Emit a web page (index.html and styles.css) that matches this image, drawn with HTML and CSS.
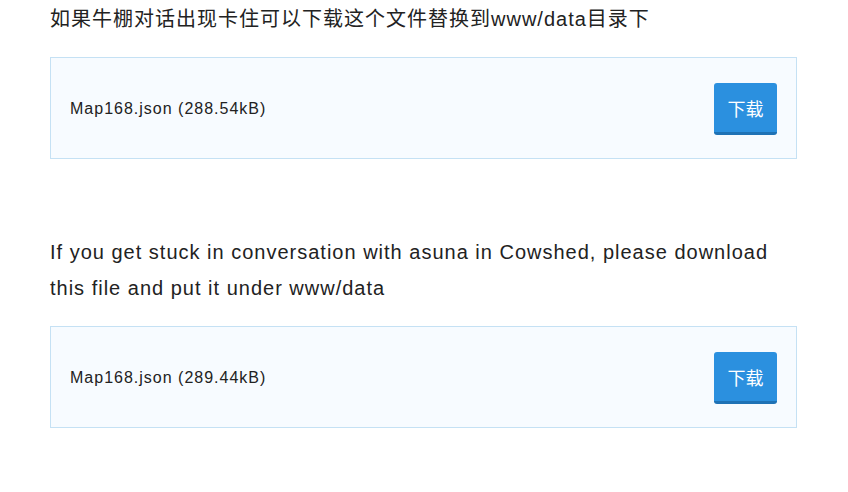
FILE: index.html
```html
<!DOCTYPE html>
<html lang="zh">
<head>
    <meta charset="utf-8">
    <meta name="viewport" content="width=device-width, initial-scale=1.0">
    <title>Map168</title>
    <link rel="stylesheet" href="styles.css">
</head>
<body>
    <main class="post">
        <p class="tekst">如果牛棚对话出现卡住可以下载这个文件替换到www/data目录下</p>
        <div class="fil">
            <span class="fil-navn">Map168.json (288.54kB)</span>
            <button class="knap">下载</button>
        </div>

        <p class="tekst">If you get stuck in conversation with asuna in Cowshed, please download this file and put it under www/data</p>
        <div class="fil">
            <span class="fil-navn">Map168.json (289.44kB)</span>
            <button class="knap">下载</button>
        </div>
    </main>
</body>
</html>
```

FILE: styles.css
```css
body{
    margin: 0;
    background-color: white;
    font-family: "Liberation Sans", Arial, "Noto Sans CJK SC", sans-serif;
    color: #222;
}
.post{
    padding: 1px 51px 0 50px;
}
.tekst{
    margin: 0 0 20px 0;
    font-size: 20px;
    line-height: 36px;
    letter-spacing: 1px;
}
.fil{
    display: flex;
    align-items: center;
    justify-content: space-between;
    height: 100px;
    padding: 2px 19px 0 19px;
    box-sizing: content-box;
    height: 98px;
    margin-bottom: 75px;
    background-color: #f7fbff;
    border: 1px solid #c5e1f4;
}
.fil-navn{
    font-size: 16px;
    letter-spacing: 1px;
    color: #222;
}
.knap{
    width: 63px;
    height: 52px;
    padding: 0;
    border: 0;
    border-bottom: 3px solid #1f72b5;
    border-radius: 3px;
    background-color: #2b90df;
    color: white;
    font-size: 18px;
    font-family: "Noto Sans CJK SC", sans-serif;
}
```
